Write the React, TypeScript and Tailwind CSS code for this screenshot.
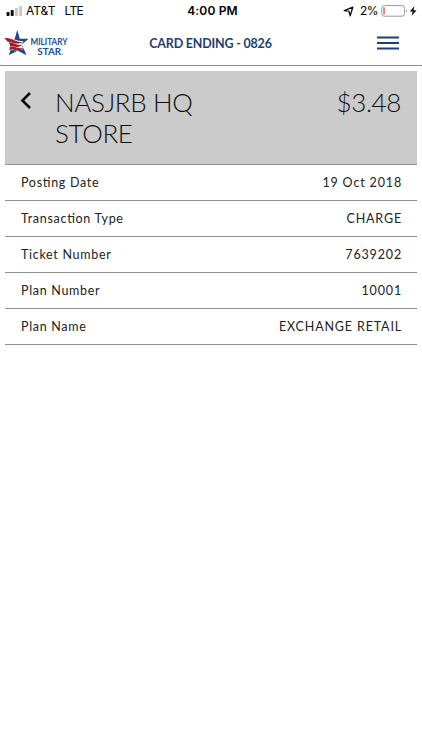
import React from 'react';

type Detail = { label: string; value: string }

const details: Detail[] = [
  { label: 'Posting Date', value: '19 Oct 2018' },
  { label: 'Transaction Type', value: 'CHARGE' },
  { label: 'Ticket Number', value: '7639202' },
  { label: 'Plan Number', value: '10001' },
  { label: 'Plan Name', value: 'EXCHANGE RETAIL' },
]

// Phone status bar
const StatusBar = () => (
  <div className="grid grid-cols-[1fr_auto_1fr] items-center h-[22px] pl-[6px] pr-[4px] text-[12px] leading-[22px] font-['Inter','Liberation_Sans',sans-serif] text-black">
    <div className="flex items-center">
      <svg width="17" height="10" viewBox="0 0 17 10" className="mr-[3px]">
        <rect x="0.5" y="6" width="3" height="4" rx="0.8" fill="#111" />
        <rect x="4.7" y="4" width="3" height="6" rx="0.8" fill="#111" />
        <rect x="8.9" y="2" width="3" height="8" rx="0.8" fill="#c9c9cb" />
        <rect x="13.1" y="0" width="3" height="10" rx="0.8" fill="#c9c9cb" />
      </svg>
      <span>AT&amp;T</span>
      <span className="ml-[9px] tracking-[-0.6px]">LTE</span>
    </div>
    <span className="pl-[1px] font-semibold tracking-[0.15px]">4:00 PM</span>
    <div className="flex items-center justify-end">
      <svg width="11" height="11" viewBox="0 0 11 11" className="mr-[6px]" fill="none" stroke="#111" strokeWidth="1.3" strokeLinejoin="round">
        <path d="M1.2 4.6 9.8 1.2 7.2 9.8 5.9 5.2Z" />
      </svg>
      <span className="mr-[3px] tracking-[-0.6px]">2%</span>
      <svg width="27" height="12" viewBox="0 0 27 12">
        <rect x="0.8" y="0.6" width="22.8" height="10.6" rx="2.6" fill="none" stroke="#999" />
        <rect x="2.4" y="2.2" width="1.3" height="7.4" rx="0.6" fill="#ee4545" />
        <path d="M25 4.2c1.3.6 1.3 2.8 0 3.4Z" fill="#999" />
      </svg>
      <svg width="9" height="10" viewBox="0 0 9 10" className="ml-[1px]">
        <path d="M5.4 0 0.8 5.6h2.8L2.6 10 7.6 4.2H4.6Z" fill="#111" />
      </svg>
    </div>
  </div>
)

const Logo = () => (
  <svg width="72" height="28" viewBox="0 0 72 28" className="block overflow-visible">
    <path d="M17.3 0 19.8 8.7H28.6L21.8 14.5 26.2 25 17.2 19.4 9.2 24.7 12 15.6 5.5 9H14.6Z" fill="#194a8f" />
    {/* white gap and the three stripes over the left arm */}
    <path d="M3.4 7.4C10 6.3 13.5 10.6 23.4 11.2L21.6 15 23.4 19.6C18 21.4 13 20.2 8 20.4L10.5 13.5Z" fill="#fff" />
    <path d="M4.3 8.1C11.5 6.9 13.8 11.9 22.8 12 17 15.6 12.3 12.1 7.9 11.8Z" fill="#a51d24" />
    <path d="M8.8 12.6C13.5 11.7 16.5 15.6 21.9 15 17.5 18.8 13.3 15.9 10.2 16.1Z" fill="#a51d24" />
    <path d="M9.8 16.7C14 15.9 18 19.1 23.4 18.1 20.5 21.9 15.2 20.1 12.6 19.6L9.4 20Z" fill="#a51d24" />
    <path d="M10.6 20.5C13 20 15 20.9 18.4 20.2L9.2 24.9Z M17.2 20.5 23.8 19.2 26.2 25Z" fill="#194a8f" />
    <text x="30.5" y="15.4" textLength="37" lengthAdjust="spacingAndGlyphs" fontFamily="Lato, sans-serif" fontSize="9" fontWeight="700" fill="#24508f">MILITARY</text>
    <text x="37.2" y="24.6" textLength="24" lengthAdjust="spacingAndGlyphs" fontFamily="Lato, sans-serif" fontSize="9.8" fontWeight="700" fill="#24508f">STAR</text>
    <circle cx="62.4" cy="24.1" r="0.6" fill="#24508f" />
  </svg>
)

const Header = () => (
  <header className="grid grid-cols-[1fr_auto_1fr] items-center h-[44px] pr-[1px] border-b border-[#8b8b8b]">
    <Logo />
    <h1 className="pt-[2px] text-[12.5px] font-bold tracking-[-0.2px] text-[#1d3f70] whitespace-nowrap">CARD ENDING - 0826</h1>
    <button className="justify-self-end mr-[22px] mb-[1px]" aria-label="Menu">
      <svg width="22" height="14" viewBox="0 0 22 14" className="block" stroke="#1d3f70" strokeWidth="1.9">
        <path d="M0 1.5H22M0 7H22M0 12.5H22" />
      </svg>
    </button>
  </header>
)

export default function App() {
  return (
    <div className="min-h-screen bg-white font-['Lato',sans-serif]">
      <StatusBar />
      <Header />

      <main className="ml-[5px] mt-[5px] w-[412px]">
        {/* Store and amount */}
        <section className="flex items-start h-[94px] bg-[#cbcbcb] border-b border-[#8f8f8f] pt-[16px] pl-[15px] pr-[16px]">
          <button className="w-[35px] pt-[5px]" aria-label="Back">
            <svg width="12" height="17" viewBox="0 0 12 17" fill="none" stroke="#000" strokeWidth="2.5">
              <path d="M10 1 2.4 8.5 10 16" />
            </svg>
          </button>
          <h2 className="w-[160px] text-[26px] leading-[31px] font-light tracking-[-0.35px] text-[#111]">NASJRB HQ STORE</h2>
          <span className="ml-auto text-[26px] leading-[31px] font-light tracking-[-0.4px] text-[#111]">$3.48</span>
        </section>

        {details.map((d) => (
          <div key={d.label} className="flex items-center justify-between h-[36px] border-b border-[#929292] pt-[2px] pl-[16px] pr-[15px] text-[12.5px] text-[#222] [font-feature-settings:'liga'_1]">
            <span className="tracking-[0.7px]">{d.label}</span>
            <span className="tracking-[0.85px]">{d.value}</span>
          </div>
        ))}
      </main>
    </div>
  );
}
